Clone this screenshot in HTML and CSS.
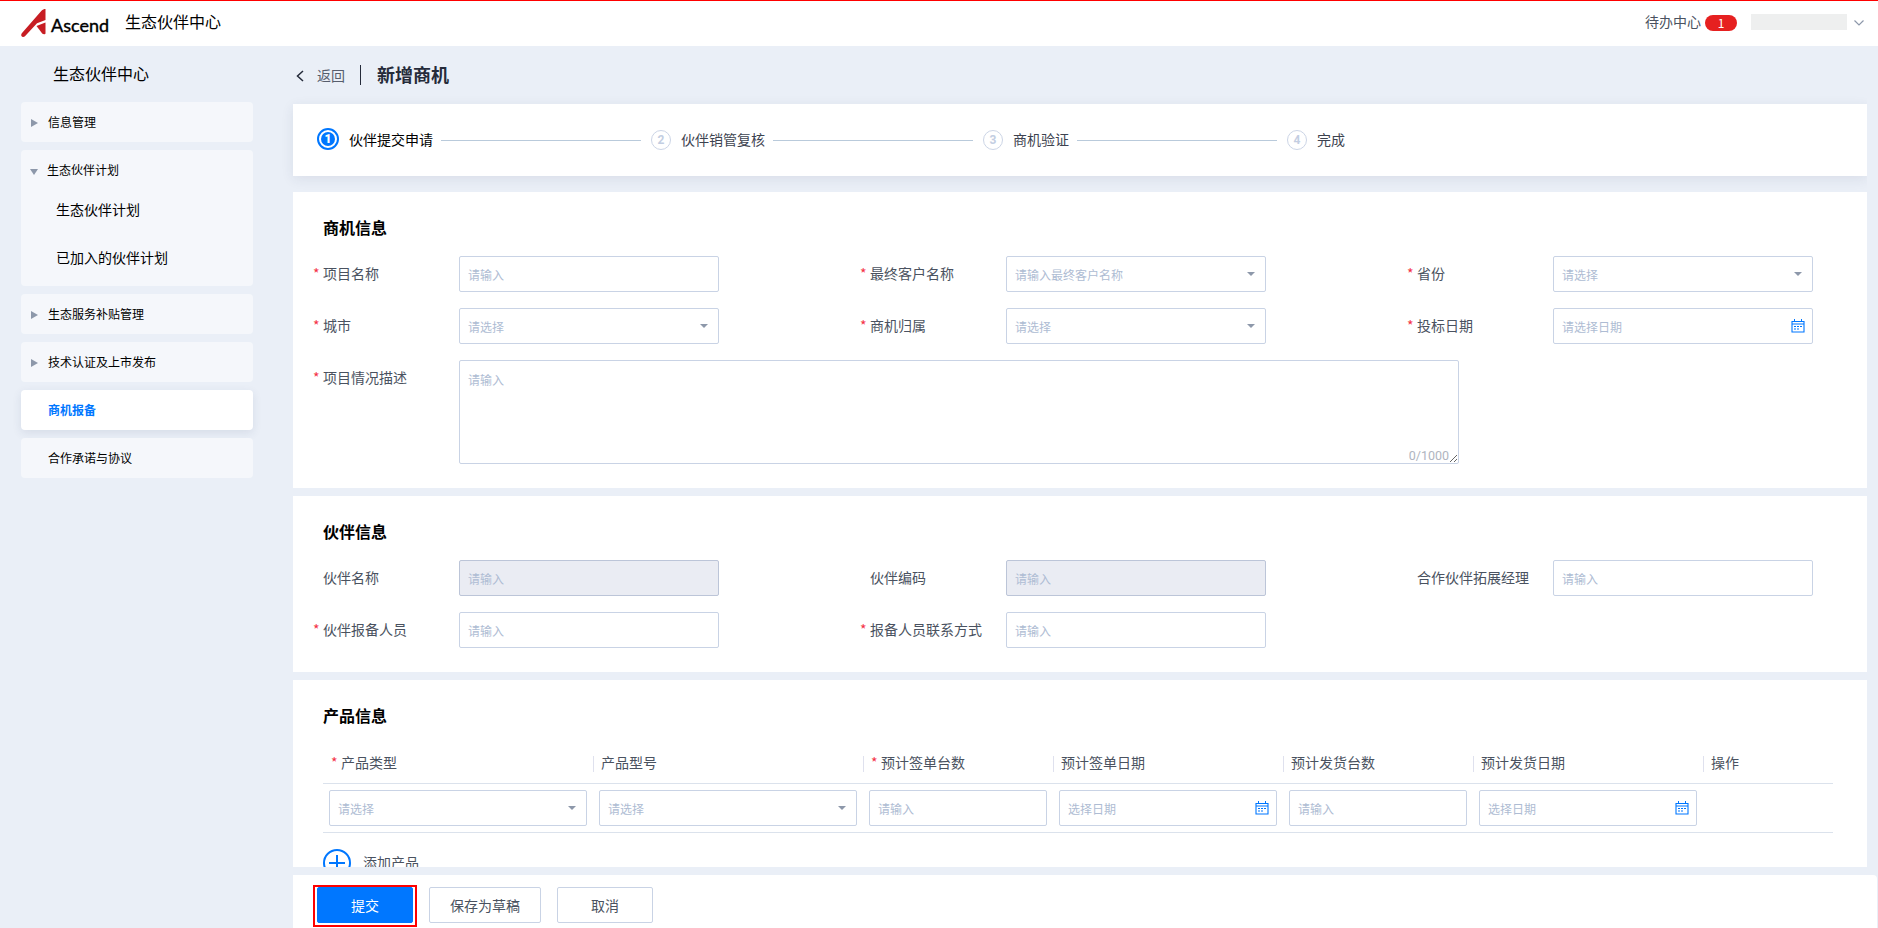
FILE: index.html
```
<!DOCTYPE html>
<html lang="zh-CN">
  <head>
    <meta charset="UTF-8" />
    <meta name="viewport" content="width=device-width, initial-scale=1.0" />
    <title>新增商机</title>
    <link rel="stylesheet" href="styles.css">
  </head>
  <body>
    <svg class="sprite">
      <symbol id="calendar" viewBox="0 0 14 14">
        <path d="M1 2.5h12v10.5h-12zM1 5h12" fill="none" stroke="#0077ff" stroke-width="1.1" />
        <path d="M3.5 0v3M10.5 0v3" stroke="#0077ff" stroke-width="1" />
        <path d="M3 7.5h2M6 7.5h2M9 7.5h2M3 10h2M6 10h2" stroke="#0077ff" stroke-width="1.1" />
      </symbol>
    </svg>

    <header class="header">
      <svg class="logo-mark" width="25" height="28" viewBox="0 0 25 28">
        <path d="M24.5 0C23 0 21.6.6 20.5 1.7L.8 24.3C-.4 26 .3 28 2 28c.9 0 1.6-.3 2.2-1L16 14.2 24.5 11z" fill="#c71d23" />
        <path d="M24.5 13.5L15.5 17l5.7 7.6c.9.8 3.3.8 3.3-.2z" fill="#c71d23" />
      </svg>
      <span class="logo-text">Ascend</span>
      <span class="site-name">生态伙伴中心</span>
      <div class="user-bar">
        <span class="todo">待办中心</span>
        <span class="badge">1</span>
        <span class="user-name"></span>
        <svg width="10" height="6" viewBox="0 0 10 6">
          <path d="M.5.5L5 5 9.5.5" fill="none" stroke="#8d98aa" stroke-width="1.2" />
        </svg>
      </div>
    </header>

    <div class="container">
      <aside class="sidebar">
        <h2>生态伙伴中心</h2>
        <div class="menu"><p class="menu-title closed">信息管理</p></div>
        <div class="menu">
          <p class="menu-title open">生态伙伴计划</p>
          <p class="menu-sub">生态伙伴计划</p>
          <p class="menu-sub">已加入的伙伴计划</p>
        </div>
        <div class="menu"><p class="menu-title closed">生态服务补贴管理</p></div>
        <div class="menu"><p class="menu-title closed">技术认证及上市发布</p></div>
        <div class="menu active"><p class="menu-title">商机报备</p></div>
        <div class="menu"><p class="menu-title">合作承诺与协议</p></div>
      </aside>

      <main class="main">
        <div class="page-title">
          <svg width="8" height="12" viewBox="0 0 8 12">
            <path d="M7 1L1.5 6 7 11" fill="none" stroke="#252b3a" stroke-width="1.5" />
          </svg>
          <a class="back">返回</a>
          <h1>新增商机</h1>
        </div>

        <div class="content">
          <div class="steps">
            <div class="step current"><i><b>1</b></i><span>伙伴提交申请</span></div>
            <div class="step"><i>2</i><span>伙伴销管复核</span></div>
            <div class="step"><i>3</i><span>商机验证</span></div>
            <div class="step"><i>4</i><span>完成</span></div>
          </div>

          <section class="card">
            <h3>商机信息</h3>
            <div class="form">
              <div class="field">
                <label class="required">项目名称</label>
                <div class="control"><input type="text" placeholder="请输入" /></div>
              </div>
              <div class="field">
                <label class="required">最终客户名称</label>
                <div class="control select"><input type="text" placeholder="请输入最终客户名称" /></div>
              </div>
              <div class="field">
                <label class="required">省份</label>
                <div class="control select"><input type="text" placeholder="请选择" /></div>
              </div>
              <div class="field">
                <label class="required">城市</label>
                <div class="control select"><input type="text" placeholder="请选择" /></div>
              </div>
              <div class="field">
                <label class="required">商机归属</label>
                <div class="control select"><input type="text" placeholder="请选择" /></div>
              </div>
              <div class="field">
                <label class="required">投标日期</label>
                <div class="control"><input type="text" placeholder="请选择日期" /><svg class="calendar"><use href="#calendar" /></svg></div>
              </div>
              <div class="field wide">
                <label class="required">项目情况描述</label>
                <div class="textarea">
                  <textarea placeholder="请输入"></textarea>
                  <span class="count">0/1000</span>
                </div>
              </div>
            </div>
          </section>

          <section class="card">
            <h3>伙伴信息</h3>
            <div class="form">
              <div class="field">
                <label>伙伴名称</label>
                <div class="control disabled"><input type="text" placeholder="请输入" disabled /></div>
              </div>
              <div class="field">
                <label>伙伴编码</label>
                <div class="control disabled"><input type="text" placeholder="请输入" disabled /></div>
              </div>
              <div class="field">
                <label>合作伙伴拓展经理</label>
                <div class="control"><input type="text" placeholder="请输入" /></div>
              </div>
              <div class="field">
                <label class="required">伙伴报备人员</label>
                <div class="control"><input type="text" placeholder="请输入" /></div>
              </div>
              <div class="field">
                <label class="required">报备人员联系方式</label>
                <div class="control"><input type="text" placeholder="请输入" /></div>
              </div>
            </div>
          </section>

          <section class="card">
            <h3>产品信息</h3>
            <div class="table">
              <div class="row head">
                <span class="required">产品类型</span>
                <span>产品型号</span>
                <span class="required">预计签单台数</span>
                <span>预计签单日期</span>
                <span>预计发货台数</span>
                <span>预计发货日期</span>
                <span>操作</span>
              </div>
              <div class="row">
                <div class="control select"><input type="text" placeholder="请选择" /></div>
                <div class="control select"><input type="text" placeholder="请选择" /></div>
                <div class="control"><input type="text" placeholder="请输入" /></div>
                <div class="control"><input type="text" placeholder="选择日期" /><svg class="calendar"><use href="#calendar" /></svg></div>
                <div class="control"><input type="text" placeholder="请输入" /></div>
                <div class="control"><input type="text" placeholder="选择日期" /><svg class="calendar"><use href="#calendar" /></svg></div>
              </div>
            </div>
            <div class="add">
              <svg width="28" height="28" viewBox="0 0 28 28">
                <circle cx="14" cy="14" r="13" fill="none" stroke="#0077ff" stroke-width="2" />
                <path d="M14 6v16M6 14h16" stroke="#0077ff" stroke-width="2" />
              </svg>
              <span>添加产品</span>
            </div>
          </section>
        </div>

        <footer class="footer">
          <div class="highlight"><button class="primary">提交</button></div>
          <button class="draft">保存为草稿</button>
          <button>取消</button>
        </footer>
      </main>
    </div>
  </body>
</html>
```
FILE: styles.css
```
*,
*::before,
*::after {
  box-sizing: border-box;
}

body {
  display: flex;
  flex-direction: column;
  height: 100vh;
  margin: 0;
  overflow: hidden;
  background-color: #eaeff7;
  color: #000;
  font-family: "Noto Sans CJK SC", sans-serif;
  font-size: 14px;
}

h1,
h2,
h3,
p {
  margin: 0;
}

.sprite {
  display: none;
}

.header {
  display: flex;
  align-items: center;
  flex: none;
  height: 46px;
  padding: 0 14px 2px 21px;
  border-top: 1px solid #f00;
  background-color: #fff;
}

.logo-mark {
  margin-top: 1px;
}

.logo-text {
  width: 79px;
  padding: 4px 0 0 5px;
  font-family: Lato, sans-serif;
  font-size: 18px;
  line-height: 20px;
  -webkit-text-stroke: 0.4px #000;
}

.site-name {
  margin-top: -3px;
  font-size: 16px;
}

.user-bar {
  display: flex;
  align-items: center;
  margin-left: auto;
}

.todo {
  margin-top: -3px;
  color: #4a5260;
}

.badge {
  width: 32px;
  height: 16px;
  margin: 0 14px 0 4px;
  border-radius: 8px;
  background-color: #e62020;
  color: #fff;
  font-size: 12px;
  line-height: 15px;
  text-align: center;
}

.user-name {
  width: 96px;
  height: 16px;
  margin: -2px 7px 0 0;
  background-color: #eeefef;
}

.container {
  display: flex;
  flex: 1;
  min-height: 0;
}

.sidebar {
  width: 253px;
  padding-left: 21px;
}

.sidebar h2 {
  height: 56px;
  padding-left: 32px;
  font-size: 16px;
  font-weight: normal;
  line-height: 55px;
}

.menu {
  margin-bottom: 8px;
  border-radius: 4px;
  background-color: #f5f7fb;
}

.menu-title {
  display: flex;
  align-items: center;
  height: 40px;
  padding: 0 0 2px 27px;
  font-size: 12px;
}

.menu-title.closed::before {
  margin: 4px 10px 0 -17px;
  border: 4px solid transparent;
  border-right: 0;
  border-left: 7px solid #8d98aa;
  content: "";
}

.menu-title.open::before {
  margin: 5px 9px 0 -18px;
  border: 4.5px solid transparent;
  border-top: 6px solid #8d98aa;
  border-bottom: 0;
  content: "";
}

.menu-sub {
  height: 48px;
  padding-left: 35px;
  line-height: 38px;
}

.menu.active {
  background-color: #fff;
  box-shadow: 0 3px 10px rgba(40, 60, 100, 0.1);
  color: #0077ff;
  font-weight: bold;
}

.main {
  display: flex;
  flex-direction: column;
  flex: 1;
  min-width: 0;
  padding-left: 40px;
}

.page-title {
  display: flex;
  align-items: center;
  flex: none;
  height: 58px;
  padding-left: 3px;
}

.page-title svg {
  margin-top: 2px;
}

.back {
  width: 43px;
  margin: -1px 0 0 13px;
  color: #575d6c;
}

.page-title h1 {
  height: 20px;
  padding-left: 16px;
  border-left: 1px solid #252b3a;
  color: #252b3a;
  font-size: 18px;
  line-height: 18px;
}

.content {
  flex: 1;
  width: 1590px;
  min-height: 0;
  /* keeps the shadow of the steps bar from being cut off */
  margin: -16px 0 0 -16px;
  padding: 16px 17px 0 16px;
  overflow: hidden;
}

.steps {
  display: flex;
  align-items: center;
  width: 1574px;
  height: 72px;
  margin-bottom: 16px;
  padding-left: 24px;
  background-color: #fff;
  box-shadow: 0 3px 12px rgba(40, 60, 90, 0.09);
}

.step {
  display: flex;
  align-items: center;
  color: #3d4350;
}

.step span {
  margin-top: -2px;
}

.step:not(:last-child)::after {
  width: 200px;
  height: 1px;
  margin: 0 10px 0 8px;
  background-color: #b9cadb;
  content: "";
}

.step i {
  width: 20px;
  height: 20px;
  margin-right: 10px;
  border: 1px solid #ccd5e6;
  border-radius: 50%;
  color: #c3cee2;
  font-family: Roboto, sans-serif;
  font-size: 12px;
  font-style: normal;
  font-weight: bold;
  line-height: 19px;
  text-align: center;
}

.step.current {
  color: #000;
}

.step.current i {
  width: 22px;
  height: 22px;
  margin-top: -2px;
  padding: 2px;
  border: 2px solid #0077ff;
}

.step.current b {
  display: block;
  height: 14px;
  border-radius: 50%;
  background-color: #0077ff;
  color: #fff;
  line-height: 14px;
}

.card {
  width: 1574px;
  margin-bottom: 8px;
  padding: 24px 30px;
  background-color: #fff;
}

.card h3 {
  height: 40px;
  font-size: 16px;
  line-height: 22px;
}

.form {
  display: grid;
  grid-template-columns: repeat(3, 547px);
  row-gap: 16px;
  width: 1514px;
}

.field {
  display: flex;
}

.field.wide {
  grid-column: span 3;
}

.field label {
  width: 136px;
  color: #4a5260;
  line-height: 34px;
}

.required::before {
  display: inline-block;
  width: 10px;
  margin-left: -10px;
  color: #f43146;
  content: "*";
}

.control {
  display: flex;
  align-items: center;
  width: 260px;
  height: 36px;
  padding: 0 8px;
  border: 1px solid #c9d3e5;
  border-radius: 2px;
}

.control.disabled {
  border-color: #bcc5d8;
  background-color: #eaecf3;
}

input {
  flex: 1;
  min-width: 0;
  padding: 0;
  border: 0;
  outline: 0;
  background: none;
  font: 12px "Noto Sans CJK SC", sans-serif;
}

::placeholder {
  color: #aebcd3;
}

.select::after {
  margin-right: 2px;
  border: 4px solid transparent;
  border-top-color: #8d98aa;
  border-bottom: 0;
  content: "";
}

.calendar {
  width: 14px;
  height: 14px;
  margin-right: -1px;
}

.textarea {
  position: relative;
  width: 1000px;
  height: 104px;
}

textarea {
  display: block;
  width: 100%;
  height: 100%;
  padding: 10px 8px;
  border: 1px solid #c9d3e5;
  border-radius: 2px;
  font: 12px "Noto Sans CJK SC", sans-serif;
}

.count {
  position: absolute;
  right: 10px;
  bottom: 1px;
  color: #b0b5c0;
  font-family: Roboto, sans-serif;
  font-size: 12.5px;
  line-height: 14px;
}

.table {
  width: 1510px;
}

.row {
  display: grid;
  grid-template-columns: 270px 270px 190px 230px 190px 230px 130px;
  align-items: center;
  height: 49px;
  border-bottom: 1px solid #dbe2ec;
}

.head {
  height: 40px;
}

.head span {
  height: 16px;
  padding-left: 7px;
  border-left: 1px solid #dfe1ee;
  color: #4a5260;
  line-height: 12px;
}

.head span:first-child {
  border-color: transparent;
}

.head .required::before {
  margin-left: 0;
}

.row .control {
  width: auto;
  margin: 0 6px;
}

.add {
  display: flex;
  align-items: center;
  gap: 12px;
  padding-top: 16px;
  color: #4a5260;
}

.add span {
  margin-top: -2px;
}

.footer {
  display: flex;
  gap: 16px;
  flex: none;
  height: 53px;
  margin: 8px 1px 0 0;
  padding: 12px 0 0 24px;
  border-radius: 0 4px 0 0;
  background-color: #fff;
}

button {
  width: 96px;
  height: 36px;
  padding: 0;
  border: 1px solid #c9d3e5;
  border-radius: 2px;
  background-color: #fff;
  color: #4a5260;
  font: 14px "Noto Sans CJK SC", sans-serif;
}

.draft {
  width: 112px;
}

.primary {
  display: block;
  border-color: #0077ff;
  background-color: #0077ff;
  color: #fff;
}

.highlight {
  height: 42px;
  margin: -2px -4px 0;
  padding: 0 2px;
  border: 2px solid #f00;
}
```
